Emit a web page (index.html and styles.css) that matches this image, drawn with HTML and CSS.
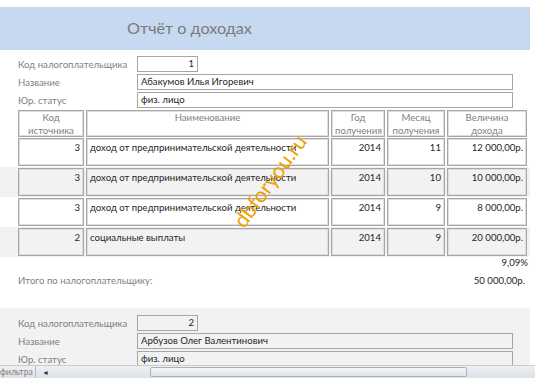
FILE: index.html
```html
<!DOCTYPE html>
<html lang="ru">
<head>
  <meta charset="UTF-8" />
  <meta name="viewport" content="width=device-width, initial-scale=1" />
  <title>Отчёт о доходах</title>
  <link rel="stylesheet" href="styles.css">
</head>
<body>
  <div class="viewport">
    <header class="report-head">
      <h1>Отчёт о доходах</h1>
    </header>

    <!-- Налогоплательщик 1 -->
    <section class="payer">
      <div class="fields">
        <div class="field"><span class="label">Код налогоплательщика</span><span class="box box-code">1</span></div>
        <div class="field"><span class="label">Название</span><span class="box">Абакумов Илья Игоревич</span></div>
        <div class="field"><span class="label">Юр. статус</span><span class="box">физ. лицо</span></div>
      </div>

      <div class="grid">
        <div class="row row-head">
          <div class="cell">Код<br>источника</div>
          <div class="cell">Наименование</div>
          <div class="cell">Год<br>получения</div>
          <div class="cell">Месяц<br>получения</div>
          <div class="cell">Величина<br>дохода</div>
        </div>
        <div class="row">
          <div class="cell num">3</div>
          <div class="cell">доход от предпринимательской деятельности</div>
          <div class="cell num">2014</div>
          <div class="cell num">11</div>
          <div class="cell num">12 000,00р.</div>
        </div>
        <div class="row row-alt">
          <div class="cell num">3</div>
          <div class="cell">доход от предпринимательской деятельности</div>
          <div class="cell num">2014</div>
          <div class="cell num">10</div>
          <div class="cell num">10 000,00р.</div>
        </div>
        <div class="row">
          <div class="cell num">3</div>
          <div class="cell">доход от предпринимательской деятельности</div>
          <div class="cell num">2014</div>
          <div class="cell num">9</div>
          <div class="cell num">8 000,00р.</div>
        </div>
        <div class="row row-alt">
          <div class="cell num">2</div>
          <div class="cell">социальные выплаты</div>
          <div class="cell num">2014</div>
          <div class="cell num">9</div>
          <div class="cell num">20 000,00р.</div>
        </div>
      </div>

      <div class="percent">9,09%</div>
      <div class="total">
        <span class="label">Итого по налогоплательщику:</span>
        <span class="sum">50 000,00р.</span>
      </div>
    </section>

    <!-- Налогоплательщик 2 -->
    <section class="payer payer-alt">
      <div class="fields">
        <div class="field"><span class="label">Код налогоплательщика</span><span class="box box-code">2</span></div>
        <div class="field"><span class="label">Название</span><span class="box">Арбузов Олег Валентинович</span></div>
        <div class="field"><span class="label">Юр. статус</span><span class="box">физ. лицо</span></div>
      </div>
    </section>

    <div class="watermark">dbforyou.ru</div>
  </div>

  <footer class="statusbar">
    <span class="filter">фильтра</span>
    <span class="nav">&#9668;</span>
    <span class="track"><span class="thumb"></span></span>
  </footer>
</body>
</html>
```

FILE: styles.css
```css
body {
  margin: 0;
  width: 535px;
  height: 100vh;
  display: flex;
  flex-direction: column;
  overflow: hidden;
  font-family: Lato, "Open Sans", sans-serif;
  font-size: 9.6px;
  color: #262626;
  background: #fff;
}

.viewport {
  position: relative;
  flex: 1;
  overflow: hidden;
}

.report-head {
  margin-top: 7px;
  width: 530px;
  height: 43px;
  background: #c6d9f1;
  display: flex;
  align-items: center;
}

.report-head h1 {
  margin: 0 0 2px 127px;
  font-size: 16.2px;
  font-weight: normal;
  color: #7a7a7a;
}

.payer {
  width: 530px;
}

.payer-alt {
  margin-top: 21px;
  padding-top: 1px;
  background: #f2f2f2;
}

.fields {
  display: flex;
  flex-direction: column;
  gap: 2px;
  padding: 6px 0 0 18px;
}

.field {
  display: flex;
  align-items: center;
  height: 16px;
  white-space: nowrap;
}

.label {
  width: 119px;
  color: #7f7f7f;
}

.box {
  box-sizing: border-box;
  width: 376px;
  height: 16px;
  padding: 0 3px;
  line-height: 14px;
  border: 1px solid #a6a6a6;
  background: #fff;
}

.payer-alt .box {
  background: #f2f2f2;
}

.box-code {
  width: 61px;
  text-align: right;
}

/* таблица доходов */
.grid {
  margin-top: 2px;
}

.row {
  display: grid;
  grid-template-columns: 66px 243px 54px 58px 80px;
  column-gap: 2px;
  padding: 1px 0 1px 18px;
  height: 28px;
}

.row-head {
  padding: 0 0 0 18px;
  height: 27px;
}

.row-alt {
  background: #f2f2f2;
}

.cell {
  box-sizing: border-box;
  border: 1px solid #a6a6a6;
  box-shadow: inset 0 0 0 1px #dedede;
  padding: 2px 3px;
  line-height: 13px;
  white-space: nowrap;
  overflow: hidden;
}

.row-head .cell {
  padding-top: 0;
  text-align: center;
  color: #7f7f7f;
}

.num {
  text-align: right;
}

.percent {
  width: 528px;
  text-align: right;
  line-height: 12px;
}

.total {
  display: flex;
  justify-content: space-between;
  width: 507px;
  margin-top: 6px;
  padding-left: 18px;
  line-height: 12px;
}

.total .label {
  width: auto;
}

.watermark {
  position: absolute;
  left: 215px;
  top: 168px;
  font-size: 21px;
  color: #f0a000;
  transform: rotate(-54deg);
}

/* нижняя полоса прокрутки */
.statusbar {
  display: flex;
  align-items: stretch;
  height: 12px;
  border-top: 1px solid #c8ccd2;
  background: linear-gradient(#eef0f3, #dde1e6);
  font-size: 8.5px;
  color: #7f7f7f;
}

.filter {
  width: 35px;
  line-height: 12px;
  border-right: 1px solid #b8bdc4;
}

.nav {
  width: 10px;
  padding-left: 6px;
  font-size: 7px;
  line-height: 12px;
  color: #333;
}

.track {
  flex: 1;
  display: flex;
  padding: 1px 0 1px 98px;
}

.thumb {
  width: 315px;
  border: 1px solid #a9b0ba;
  border-radius: 2px;
  background: linear-gradient(#f6f7f9, #dfe3e8);
}
```
